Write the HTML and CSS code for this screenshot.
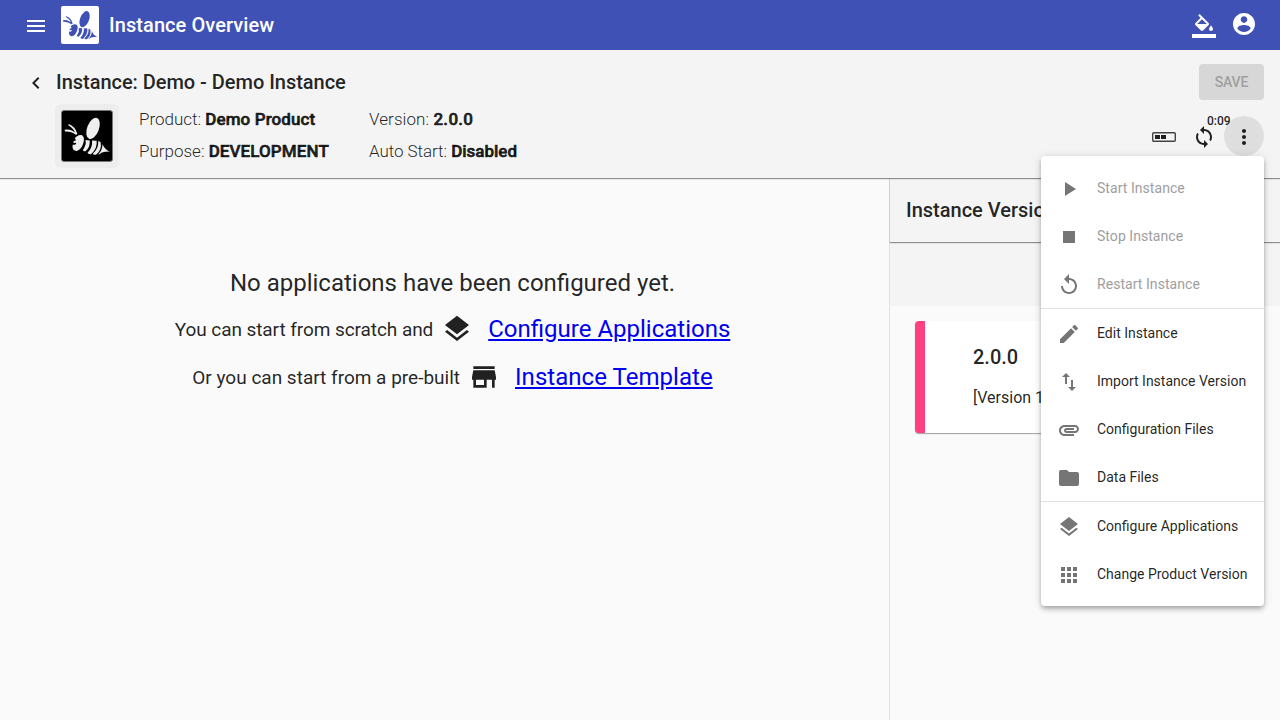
FILE: index.html
```html
<!DOCTYPE html>
<html lang="en">
<head>
<meta charset="utf-8">
<title>Instance Overview</title>
<link rel="stylesheet" href="styles.css">
</head>
<body>
<svg class="defs" aria-hidden="true">
  <symbol id="bee" viewBox="0 0 153 153">
    <ellipse cx="95" cy="53" rx="18" ry="34" transform="rotate(21 95 53)"/>
    <path d="M20 40Q41 48 47 70L43 71Q35 52 20 44ZM8 57Q31 54 46 72L42 73Q29 62 9 63Z"/>
    <path d="M46 77C57 69 69 74 67 90C65 107 53 124 42 122C33 120 31 111 33 103C39 105 44 102 43 97L36 98C33 94 36 90 41 91C44 87 40 84 39 84Q41 80 46 77Z"/>
    <path d="M72 89L85 90Q86 111 72 123Q65 125 64 119Q75 105 72 89ZM92 90L106 91Q109 114 89 132Q81 134 78 128Q94 113 92 90ZM111 92L118 95Q123 119 105 133Q97 135 94 131Q112 116 111 92ZM124 101Q129 117 146 124Q131 124 122 127Q115 133 110 133Q124 121 124 101Z"/>
  </symbol>
  <symbol id="layers" viewBox="0 0 24 24"><path d="M11.99 18.54l-7.37-5.73L3 14.07l9 7 9-7-1.63-1.27-7.38 5.74zM12 16l7.36-5.73L21 9l-9-7-9 7 1.63 1.27L12 16z"/></symbol>
</svg>
<header class="topbar">
  <svg class="icon menu-button" viewBox="0 0 24 24"><path d="M3 18h18v-2H3v2zm0-5h18v-2H3v2zm0-7v2h18V6H3z"/></svg>
  <div class="brand"><svg><use href="#bee"/></svg></div>
  <h1>Instance Overview</h1>
  <svg class="icon theme" viewBox="0 0 24 24"><path d="M16.56 8.94L7.62 0 6.21 1.41l2.38 2.38-5.15 5.15c-.59.59-.59 1.54 0 2.12l5.5 5.5c.29.29.68.44 1.06.44s.77-.15 1.06-.44l5.5-5.5c.59-.58.59-1.53 0-2.12zM5.21 10L10 5.21 14.79 10H5.21zM19 11.5s-2 2.17-2 3.5c0 1.1.9 2 2 2s2-.9 2-2c0-1.33-2-3.5-2-3.5zM0 20h24v4H0v-4z"/></svg>
  <svg class="icon account" viewBox="0 0 24 24"><path d="M12 1C5.93 1 1 5.93 1 12s4.93 11 11 11 11-4.93 11-11S18.07 1 12 1zm0 3.3c1.83 0 3.3 1.47 3.3 3.3s-1.47 3.3-3.3 3.3-3.3-1.47-3.3-3.3S10.170 4.300 12 4.300zm0 15.620c-2.750 0-5.180-1.410-6.600-3.540.030-2.190 4.400-3.390 6.600-3.390 2.190 0 6.570 1.200 6.600 3.390-1.420 2.130-3.850 3.540-6.600 3.540z"/></svg>
</header>

<section class="instance">
  <div class="title-row">
    <svg class="icon back" viewBox="0 0 24 24"><path d="M15.410 7.410L14 6l-6 6 6 6 1.410-1.410L10.830 12z"/></svg>
    <h2>Instance: Demo - Demo Instance</h2>
    <button class="save" disabled>SAVE</button>
  </div>
  <div class="info-row">
    <div class="logo"><div class="logo-inner"><svg><use href="#bee"/></svg></div></div>
    <div class="facts first"><p>Product: <b>Demo Product</b></p><p>Purpose: <b>DEVELOPMENT</b></p></div>
    <div class="facts second"><p class="version">Version: <b>2.0.0</b></p><p class="autostart">Auto Start: <b>Disabled</b></p></div>
    <div class="actions">
      <svg class="icon" viewBox="0 0 24 24"><rect x=".7" y="7.700" width="22.600" height="8.600" rx="1" fill="none" stroke="#444" stroke-width="1.400"/><path d="M3 10h5v4H3zM9 10h5v4H9z"/></svg>
      <div class="refresh"><svg class="icon" viewBox="0 0 24 24"><path d="M12 4V1L8 5l4 4V6c3.310 0 6 2.690 6 6 0 1.010-.250 1.970-.700 2.800l1.460 1.460C19.540 15.030 20 13.570 20 12c0-4.420-3.580-8-8-8zm0 14c-3.310 0-6-2.690-6-6 0-1.010.250-1.970.700-2.800L5.240 7.740C4.460 8.970 4 10.430 4 12c0 4.420 3.580 8 8 8v3l4-4-4-4v3z"/></svg><span class="countdown">0:09</span></div>
      <div class="more"><svg class="icon" viewBox="0 0 24 24"><path d="M12 8c1.100 0 2-.9 2-2s-.9-2-2-2-2 .9-2 2 .9 2 2 2zm0 2c-1.100 0-2 .9-2 2s.9 2 2 2 2-.9 2-2-.9-2-2-2zm0 6c-1.100 0-2 .9-2 2s.9 2 2 2 2-.9 2-2-.9-2-2-2z"/></svg></div>
    </div>
  </div>
</section>

<div class="content">
  <main class="empty">
    <p class="headline">No applications have been configured yet.</p>
    <p class="option scratch">You can start from scratch and <svg class="big-icon"><use href="#layers"/></svg><a href="#">Configure Applications</a></p>
    <p class="option template">Or you can start from a pre-built <svg class="big-icon" viewBox="0 0 24 24"><path d="M20 4H4v2h16V4zm1 10v-2l-1-5H4l-1 5v2h1v6h10v-6h4v6h2v-6h1zm-9 4H6v-4h6v4z"/></svg><a href="#">Instance Template</a></p>
  </main>
  <aside class="versions">
    <h2 class="versions-title">Instance Versions</h2>
    <div class="versions-tools"></div>
    <article class="card"><h3>2.0.0</h3><p>[Version 1]</p></article>
  </aside>
</div>

<nav class="menu">
  <div class="item disabled"><svg class="icon" viewBox="0 0 24 24"><path d="M8 5v14l11-7z"/></svg><span>Start Instance</span></div>
  <div class="item disabled"><svg class="icon" viewBox="0 0 24 24"><path d="M6 6h12v12H6z"/></svg><span>Stop Instance</span></div>
  <div class="item disabled"><svg class="icon" viewBox="0 0 24 24"><path d="M12 5V1L7 6l5 5V7c3.310 0 6 2.690 6 6s-2.690 6-6 6-6-2.690-6-6H4c0 4.420 3.580 8 8 8s8-3.580 8-8-3.580-8-8-8z"/></svg><span>Restart Instance</span></div>
  <hr>
  <div class="item"><svg class="icon" viewBox="0 0 24 24"><path d="M3 17.250V21h3.750L17.810 9.940l-3.750-3.750L3 17.250zM20.710 7.040c.390-.390.390-1.020 0-1.410l-2.340-2.340c-.390-.390-1.020-.390-1.410 0l-1.830 1.830 3.750 3.750 1.830-1.830z"/></svg><span>Edit Instance</span></div>
  <div class="item"><svg class="icon" viewBox="0 0 24 24"><path d="M9 3L5 6.990h3V14h2V6.990h3L9 3zm7 14.010V10h-2v7.010h-3L15 21l4-3.990h-3z"/></svg><span>Import Instance Version</span></div>
  <div class="item"><svg class="icon" viewBox="0 0 24 24"><path d="M2 12.500C2 9.460 4.460 7 7.500 7H18c2.210 0 4 1.790 4 4s-1.790 4-4 4H9.500C8.120 15 7 13.880 7 12.500S8.120 10 9.500 10H17v2H9.410c-.55 0-.55 1 0 1H18c1.100 0 2-.9 2-2s-.9-2-2-2H7.500C5.570 9 4 10.570 4 12.500S5.570 16 7.500 16H17v2H7.500C4.460 18 2 15.540 2 12.500z"/></svg><span>Configuration Files</span></div>
  <div class="item"><svg class="icon" viewBox="0 0 24 24"><path d="M10 4H4c-1.100 0-1.990.9-1.990 2L2 18c0 1.100.9 2 2 2h16c1.100 0 2-.9 2-2V8c0-1.100-.9-2-2-2h-8l-2-2z"/></svg><span>Data Files</span></div>
  <hr>
  <div class="item"><svg class="icon"><use href="#layers"/></svg><span>Configure Applications</span></div>
  <div class="item"><svg class="icon" viewBox="0 0 24 24"><path d="M4 8h4V4H4v4zm6 12h4v-4h-4v4zm-6 0h4v-4H4v4zm0-6h4v-4H4v4zm6 0h4v-4h-4v4zm6-10v4h4V4h-4zm-6 4h4V4h-4v4zm6 6h4v-4h-4v4zm0 6h4v-4h-4v4z"/></svg><span>Change Product Version</span></div>
</nav>
</body>
</html>
```
FILE: styles.css
```css
* { box-sizing: border-box; }
body {
  margin: 0;
  height: 720px;
  overflow: hidden;
  display: flex;
  flex-direction: column;
  position: relative;
  background: #fafafa;
  color: rgba(0, 0, 0, .87);
  font-family: Roboto, "Liberation Sans", sans-serif;
}
h1, h2, h3, p { margin: 0; font-weight: 500; }
.defs { position: absolute; width: 0; height: 0; }
.icon { display: block; width: 24px; height: 24px; fill: currentColor; flex: none; }

.topbar {
  height: 50px;
  flex: none;
  display: flex;
  align-items: center;
  padding: 0 24px;
  background: #3f51b5;
  color: #fff;
}
.menu-button { margin-top: 2px; }
.brand { width: 38px; height: 38px; margin: 0 10px 0 13px; border-radius: 2px; background: #fff; color: #3f51b5; }
.brand svg { display: block; width: 38px; height: 38px; fill: currentColor; }
.topbar h1 { flex: 1; font-size: 20px; line-height: 32px; letter-spacing: .07px; }
.theme { margin-right: 16px; margin-top: 2px; }
.account { margin-top: -2px; }

.instance {
  height: 128px;
  flex: none;
  padding: 14px 16px 0 24px;
  background: #f4f4f4;
  box-shadow: 0 1px 1px rgba(0, 0, 0, .42);
  position: relative;
  z-index: 1;
}
.title-row { display: flex; height: 36px; align-items: center; }
.back { margin: 2px 8px 0 0; }
.title-row h2 { flex: 1; font-size: 20px; line-height: 32px; letter-spacing: -.03px; }
.save {
  width: 65px;
  height: 36px;
  border: 0;
  border-radius: 4px;
  padding: 0;
  background: #d7d7d7;
  color: #9f9f9f;
  font: 500 14px/36px Roboto, sans-serif;
  letter-spacing: -.1px;
}
.info-row { display: flex; padding: 4px 0 0 31px; }
.logo { width: 64px; height: 64px; padding: 6px; border-radius: 6px; background: #ededed; }
.logo-inner { width: 52px; height: 52px; border-radius: 3px; background: #000; border: 1px solid #777; color: #eee; }
.logo-inner svg { display: block; width: 50px; height: 50px; fill: currentColor; }
.facts { margin-left: 20px; margin-top: -1px; }
.facts.first { width: 210px; }
.facts p { font-size: 17px; line-height: 32px; font-weight: 300; white-space: nowrap; }
.facts b { font-weight: 500; -webkit-text-stroke: .6px currentColor; letter-spacing: .1px; }
.facts .version { letter-spacing: .08px; }
.facts .version b { letter-spacing: .3px; }
.facts .autostart { letter-spacing: -.06px; }
.facts .autostart b { letter-spacing: 0; }
.actions { display: flex; margin-left: auto; margin-top: 12px; align-items: flex-start; }
.actions > .icon { margin: 9px 16px 0 0; }
.refresh { position: relative; margin: 9px 8px 0 -4px; padding-left: 4px; }
.countdown { position: absolute; left: 19px; top: -12px; font-size: 12px; line-height: 16px; font-weight: 500; }
.more { width: 40px; height: 40px; border-radius: 50%; background: #dedede; padding: 9px 8px; }

.content { flex: 1; display: flex; min-height: 0; }
.empty { flex: 1; display: flex; flex-direction: column; align-items: center; padding: 81px 0 0 16px; }
.headline { font-size: 24px; line-height: 48px; font-weight: 400; margin-bottom: -2px; }
.option { display: flex; align-items: center; height: 48px; font-size: 19px; font-weight: 400; }
.scratch { letter-spacing: -.07px; }
.option a { color: #00e; font-size: 24px; letter-spacing: 0; }
.template a { letter-spacing: .04px; }
.big-icon { width: 32px; height: 32px; margin: 0 15px 0 8px; fill: #212121; }
.versions { width: 391px; border-left: 1px solid #e0e0e0; }
.versions-title {
  height: 64px;
  padding-left: 16px;
  font-size: 20px;
  line-height: 64px;
  background: #f4f4f4;
  box-shadow: 0 1px 1px rgba(0, 0, 0, .42);
  position: relative;
}
.versions-tools { height: 64px; background: #f4f4f4; }
.card {
  margin: 15px 25px 0;
  height: 112px;
  padding: 20px 48px 0;
  background: #fff;
  border-left: 10px solid #ff4081;
  border-radius: 4px;
  box-shadow: 0 1px 1px rgba(0, 0, 0, .36);
}
.card h3 { font-size: 20px; line-height: 32px; }
.card p { font-size: 16px; line-height: 24px; font-weight: 400; margin-top: 13px; }

.menu {
  position: absolute;
  z-index: 2;
  right: 16px;
  top: 156px;
  width: 223px;
  padding: 8px 0;
  border-radius: 4px;
  background: #fff;
  box-shadow: 0 2px 4px -1px rgba(0, 0, 0, .2), 0 4px 5px rgba(0, 0, 0, .14), 0 1px 10px rgba(0, 0, 0, .12);
}
.item { display: flex; align-items: center; height: 48px; padding: 0 16px; font-size: 14px; white-space: nowrap; }
.item .icon { color: #757575; margin: 2px 16px 0 0; }
.item.disabled { color: #9e9e9e; letter-spacing: .05px; }
.menu hr { height: 1px; margin: 0; border: 0; background: #e0e0e0; }
```
